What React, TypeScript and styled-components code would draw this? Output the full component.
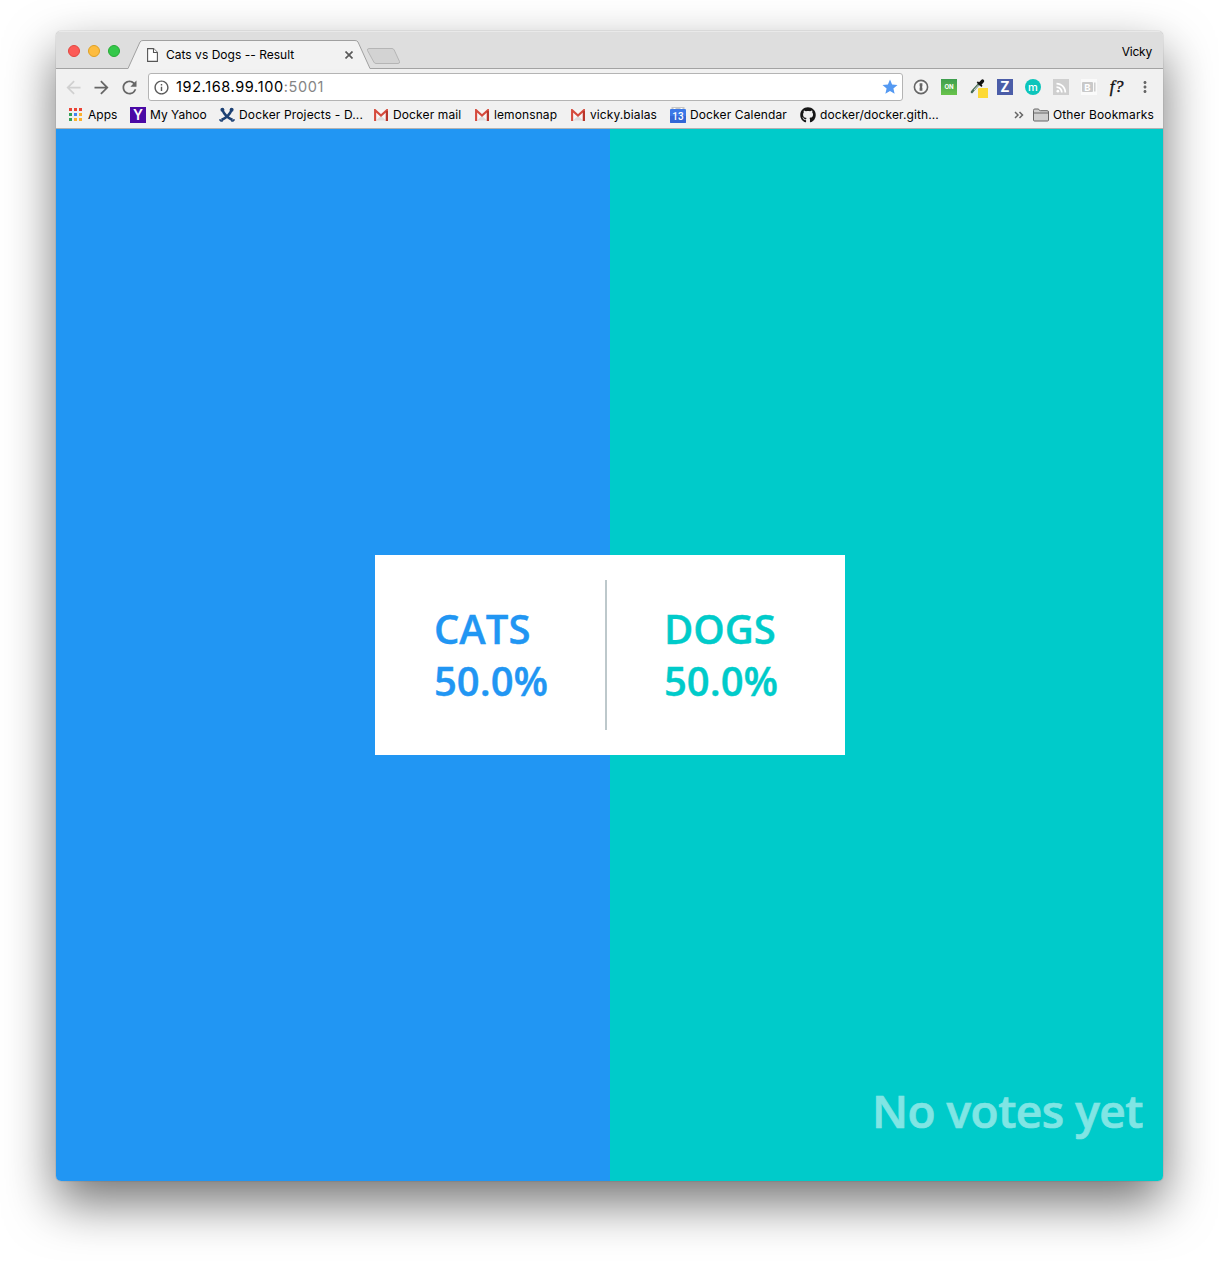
import React from 'react';
import styled, { createGlobalStyle } from 'styled-components';
import { MdArrowBack, MdArrowForward, MdRefresh, MdInfoOutline, MdStar, MdMoreVert, MdRssFeed } from 'react-icons/md';
import { FaGithub } from 'react-icons/fa';

const GlobalStyle = createGlobalStyle`
  * { box-sizing: border-box; }
  body { margin: 0; background: #fff; font-family: Inter, Roboto, sans-serif; color: #000; }
  svg { display: block; flex: none; }
`;

const Desktop = styled.main`
  width: 1219px;
  height: 1261px;
  padding: 31px 56px 80px;
  overflow: hidden;
`;

const Window = styled.section`
  width: 1107px;
  height: 1150px;
  display: flex;
  flex-direction: column;
  border-radius: 5px;
  overflow: hidden;
  box-shadow: 0 0 1px rgba(0, 0, 0, 0.55), 0 22px 50px rgba(0, 0, 0, 0.55);
`;

const TabStrip = styled.header`
  position: relative;
  height: 38px;
  flex: none;
  display: flex;
  background: #dedede;
  box-shadow: inset 0 1px #e9e9e9, inset 0 -1px #a3a3a3;
`;

const Lights = styled.div`
  display: flex;
  gap: 8px;
  padding: 14px 0 0 12px;
  width: 72px;
`;

const Light = styled.span<{ $fill: string; $ring: string }>`
  width: 12px;
  height: 12px;
  border-radius: 50%;
  background: ${p => p.$fill};
  border: 1px solid ${p => p.$ring};
  flex: none;
`;

const Tab = styled.div`
  position: relative;
  width: 244px;
  height: 38px;
  display: flex;
  align-items: center;
  padding: 9px 19px 0 19px;
`;

const TabShape = styled.svg`
  position: absolute;
  left: 0;
  top: 0;
`;

const TabTitle = styled.span`
  position: relative;
  margin-left: 8px;
  flex: 1;
  font-size: 12px;
  letter-spacing: 0.02px;
  line-height: 16px;
  white-space: nowrap;
`;

const TabIcon = styled.span`
  position: relative;
  display: flex;
`;

const NewTab = styled.svg`
  margin: 16px 0 0 -6px;
`;

const Profile = styled.span`
  margin-left: auto;
  padding: 13px 11px 0 0;
  font-size: 12px;
  letter-spacing: -0.2px;
  line-height: 16px;
`;

const Toolbar = styled.div`
  height: 32px;
  flex: none;
  display: flex;
  align-items: flex-start;
  padding: 4px 4px 0;
  background: #f1f1f1;
`;

const Slot = styled.span<{ $tone?: string }>`
  width: 28px;
  height: 28px;
  display: flex;
  align-items: center;
  justify-content: center;
  color: ${p => p.$tone ?? '#666'};
`;

const NavButton = styled(Slot)`
  padding-right: 1px;
`;

const AddressBar = styled.div`
  width: 755px;
  height: 28px;
  margin: 0 4px;
  display: flex;
  align-items: center;
  padding: 0 3px 0 4px;
  background: #fff;
  border: 1px solid #b4b4b4;
  border-radius: 3px;
  color: #5a5a5a;
`;

const Address = styled.span`
  flex: 1;
  margin-left: 6px;
  color: #000;
  font-size: 14.5px;
  letter-spacing: 0.62px;
  line-height: 18px;
`;

const Port = styled.span`
  color: #858585;
`;

const Badge = styled.span<{ $bg: string; $size: number; $weight?: number; $round?: boolean }>`
  width: 16px;
  height: 16px;
  display: flex;
  align-items: center;
  justify-content: center;
  background: ${p => p.$bg};
  border-radius: ${p => (p.$round ? '50%' : '0')};
  color: #fff;
  font: ${p => p.$weight ?? 700} ${p => p.$size}px/16px Inter, sans-serif;
  flex: none;
`;

const ScriptMark = styled.span`
  color: #111;
  font: italic 400 17px/20px 'Liberation Serif', serif;
  letter-spacing: 0.6px;
  -webkit-text-stroke: 0.4px #111;
`;

const BookmarksBar = styled.nav`
  height: 28px;
  flex: none;
  display: flex;
  align-items: center;
  padding: 0 9px 0 12px;
  background: #f1f1f1;
  border-bottom: 1px solid #b2b2b2;
`;

const Bookmark = styled.span<{ $width?: number; $spacing?: number }>`
  width: ${p => (p.$width ? `${p.$width}px` : 'auto')};
  display: flex;
  align-items: center;
  gap: 4px;
  flex: none;
  font-size: 12px;
  line-height: 16px;
  letter-spacing: ${p => p.$spacing ?? 0.1}px;
  white-space: nowrap;
`;

const BookmarkIcon = styled.span`
  width: 16px;
  height: 16px;
  display: flex;
  align-items: center;
  justify-content: center;
  letter-spacing: 0;
`;

const More = styled.span`
  margin-left: auto;
  width: 19px;
  display: flex;
`;

const Results = styled.div`
  position: relative;
  flex: 1;
  display: grid;
  grid-template-columns: 554px 553px;
  font-family: 'Open Sans', sans-serif;
  font-weight: 600;
`;

const Side = styled.div<{ $bg: string }>`
  background: ${p => p.$bg};
`;

const Card = styled.div`
  position: absolute;
  left: 319px;
  top: 426px;
  width: 470px;
  height: 200px;
  display: flex;
  align-items: center;
  background: #fff;
`;

const Choice = styled.div<{ $color: string }>`
  width: 230px;
  padding: 0 0 0 59px;
  color: ${p => p.$color};
  -webkit-text-stroke: 0.4px ${p => p.$color};
  font-size: 40px;
  line-height: 52px;
`;

const Divider = styled.div`
  width: 2px;
  height: 150px;
  margin-right: -2px;
  background: #bdc8cb;
`;

const Votes = styled.div`
  position: absolute;
  right: 20px;
  bottom: 39px;
  color: #fff;
  -webkit-text-stroke: 0.7px #fff;
  opacity: 0.5;
  font-size: 46px;
  letter-spacing: -0.5px;
  line-height: 64px;
`;

const AppsIcon = () => (
  <svg width="16" height="14" viewBox="0 0 16 14">
    {['#ea4335', '#ea4335', '#ea4335', '#34a058', '#4285f4', '#fbb12d', '#34a058', '#fbb12d', '#fbb12d'].map((c, i) => (
      <rect key={i} x={1 + (i % 3) * 5} y={Math.floor(i / 3) * 5} width="3" height="3" fill={c} />
    ))}
  </svg>
);

const KnotIcon = () => (
  <svg width="16" height="16" viewBox="0 0 16 16" fill="none" stroke="#1d4174">
    <path d="M3.400 3C5 7 8 10.500 13.500 13" strokeWidth="2.500" />
    <path d="M12.600 3C11 7 8 10.500 2.500 13" strokeWidth="2.500" />
    <path d="M.7 12.300q.6 2.200 3 1.500M15.300 12.300q-.6 2.200-3 1.500" strokeWidth="1.600" />
    <circle cx="3.400" cy="2.800" r="2" fill="#1d4174" stroke="none" />
    <circle cx="12.600" cy="2.800" r="2" fill="#1d4174" stroke="none" />
  </svg>
);

const MailIcon = () => (
  <svg width="14" height="12" viewBox="0 0 14 12">
    <path d="M1 1h12v10.500H1z" fill="#f7f5f5" />
    <path d="M2 11.500 7 7l5 4.500z" fill="#dcdcdc" />
    <path d="M1.100 12V1.200L7 6.600l5.900-5.400V12" fill="none" stroke="#d54b3d" strokeWidth="2.100" />
    <path d="M12.900 2v10" stroke="#b8352b" strokeWidth="2.100" />
  </svg>
);

const CalendarIcon = () => (
  <svg width="16" height="16" viewBox="0 0 16 16">
    <path d="M1.500 0h13v4h-13z" fill="#c6c6c6" />
    <path d="M3.500 1.500h2M10.500 1.500h2" stroke="#fff" strokeWidth="1" />
    <path d="M0 3q0-1 1-1h14q1 0 1 1v12q0 1-1 1H1q-1 0-1-1z" fill="#3b78e7" />
    <path d="M0 9h16v6q0 1-1 1H1q-1 0-1-1z" fill="#3367d6" />
    <text x="8" y="12.800" textAnchor="middle" fill="#fff" fontFamily="Roboto" fontSize="10" fontWeight="500">13</text>
  </svg>
);

const FolderIcon = () => (
  <svg width="16" height="14" viewBox="0 0 16 14" stroke="#666" fill="#cfcfcf">
    <path d="M.5 12V2.300Q.5 1 1.800 1H5q1 0 1.200.9.200.8 1.200.8h6.800q1.300 0 1.300 1.300v8q0 1-1 1h-13q-1 0-1-1z" />
    <path d="M.7 5h14.600" />
  </svg>
);

const KeyholeIcon = () => (
  <svg width="16" height="16" viewBox="0 0 16 16">
    <circle cx="8" cy="8" r="6.600" fill="#f7f7f7" stroke="#666" strokeWidth="1.600" />
    <path d="M6.600 4.300h2.800v3l-.6.7.6.7v3H6.600v-3l.6-.7-.6-.7z" fill="#666" />
  </svg>
);

const DropperIcon = () => (
  <svg width="22" height="22" viewBox="0 0 22 22">
    <path d="m13 8-5.500 6-1.600 2" stroke="#496b56" strokeWidth="2.400" strokeLinecap="round" fill="none" />
    <path d="m12.500 9-4.500 5" stroke="#d5e5da" strokeWidth=".9" />
    <path d="m11.300 6 4.700 4.300" stroke="#111" strokeWidth="1.700" />
    <path d="m14.300 7.500 2.200-2.400" stroke="#111" strokeWidth="3.400" strokeLinecap="round" />
    <rect x="12" y="12" width="11" height="11" rx="1" fill="#fdd935" />
  </svg>
);

const bookmarks = [
  { label: 'Apps', width: 62, spacing: 0.05, icon: <AppsIcon /> },
  { label: 'My Yahoo', width: 89, spacing: 0.02, icon: <Badge $bg="#4a0aa5" $size={14} $weight={600}>Y</Badge> },
  { label: 'Docker Projects - D...', width: 154, spacing: 0.15, icon: <KnotIcon /> },
  { label: 'Docker mail', width: 101, spacing: 0.13, icon: <MailIcon /> },
  { label: 'lemonsnap', width: 96, spacing: 0.1, icon: <MailIcon /> },
  { label: 'vicky.bialas', width: 100, spacing: 0.1, icon: <MailIcon /> },
  { label: 'Docker Calendar', width: 130, spacing: 0.13, icon: <CalendarIcon /> },
  { label: 'docker/docker.gith...', width: 144, spacing: 0.1, icon: <FaGithub size={16} color="#171717" /> },
];

export default function App() {
  return (
    <>
      <GlobalStyle />
      <Desktop>
        <Window>
          <TabStrip>
            <Lights>
              <Light $fill="#fc5b57" $ring="#e2463f" />
              <Light $fill="#fdbc40" $ring="#dfa023" />
              <Light $fill="#34c84a" $ring="#27aa35" />
            </Lights>
            <Tab>
              <TabShape width="244" height="38" viewBox="0 0 244 38">
                <path d="M0 37.500 12 11Q13 9.500 15 9.500H227Q229 9.500 230 11L242 37.500V38H0z" fill="#f2f2f2" />
                <path d="M0 37.500 12 11Q13 9.500 15 9.500H227Q229 9.500 230 11L242 37.500" fill="none" stroke="#a0a0a0" />
              </TabShape>
              <TabIcon>
                <svg width="11" height="14" viewBox="0 0 11 14" fill="#fff" stroke="#555" strokeWidth="1.100">
                  <path d="M.6.600H6.500L10.400 4.500V13.400H.6z" />
                  <path d="M6.500.600V4.500h3.900" />
                </svg>
              </TabIcon>
              <TabTitle>Cats vs Dogs -- Result</TabTitle>
              <TabIcon>
                <svg width="8" height="8" viewBox="0 0 8 8" fill="none" stroke="#5a5a5a" strokeWidth="1.700">
                  <path d="m.5.5 7 7M7.500.5l-7 7" />
                </svg>
              </TabIcon>
            </Tab>
            <NewTab width="35" height="18" viewBox="0 0 35 18">
              <path d="M3 1.500H26Q27.500 1.500 28.200 3L33.500 14.500Q34 16.500 32 16.500H10Q8.500 16.500 7.800 15L1.500 3.500Q1 1.500 3 1.500z" fill="#d3d3d3" stroke="#b5b5b5" />
            </NewTab>
            <Profile>Vicky</Profile>
          </TabStrip>
          <Toolbar>
            <NavButton $tone="#d0d0d0"><MdArrowBack size={21} /></NavButton>
            <NavButton><MdArrowForward size={21} /></NavButton>
            <NavButton><MdRefresh size={21} /></NavButton>
            <AddressBar>
              <MdInfoOutline size={17} />
              <Address>192.168.99.100<Port>:5001</Port></Address>
              <MdStar size={18} color="#5499f2" />
            </AddressBar>
            <Slot><KeyholeIcon /></Slot>
            <Slot><Badge $bg="linear-gradient(#3e9e4e, #68c34a)" $size={6}>ON</Badge></Slot>
            <Slot><DropperIcon /></Slot>
            <Slot><Badge $bg="#4b5da8" $size={14}>Z</Badge></Slot>
            <Slot><Badge $bg="#0cc5bb" $size={11} $weight={500} $round>m</Badge></Slot>
            <Slot><Badge $bg="#cfcfcf" $size={10}><MdRssFeed size={15} /></Badge></Slot>
            <Slot>
              <Badge $bg="#fafafa" $size={10}>
                <svg width="14" height="12" viewBox="0 0 14 12">
                  <rect x="0" y="1" width="11" height="10" rx="1" fill="#c9c9c9" />
                  <path d="M12.800 1.500v9" stroke="#c9c9c9" strokeWidth="1.400" />
                  <text x="5.500" y="9.500" textAnchor="middle" fill="#fff" fontSize="9.500" fontWeight="700">B</text>
                </svg>
              </Badge>
            </Slot>
            <Slot><ScriptMark>f?</ScriptMark></Slot>
            <Slot><MdMoreVert size={18} /></Slot>
          </Toolbar>
          <BookmarksBar>
            {bookmarks.map(b => (
              <Bookmark key={b.label} $width={b.width} $spacing={b.spacing}>
                <BookmarkIcon>{b.icon}</BookmarkIcon>
                {b.label}
              </Bookmark>
            ))}
            <More>
              <svg width="10" height="8" viewBox="0 0 10 8" fill="none" stroke="#666" strokeWidth="1.500">
                <path d="m1 1 3 3-3 3M5.500 1l3 3-3 3" />
              </svg>
            </More>
            <Bookmark $spacing={0.15}>
              <BookmarkIcon><FolderIcon /></BookmarkIcon>
              Other Bookmarks
            </Bookmark>
          </BookmarksBar>
          <Results>
            <Side $bg="#2196f3" />
            <Side $bg="#00cbca" />
            <Card>
              <Choice $color="#2196f3">CATS<br />50.0%</Choice>
              <Divider />
              <Choice $color="#00cbca">DOGS<br />50.0%</Choice>
            </Card>
            <Votes>No votes yet</Votes>
          </Results>
        </Window>
      </Desktop>
    </>
  );
}
